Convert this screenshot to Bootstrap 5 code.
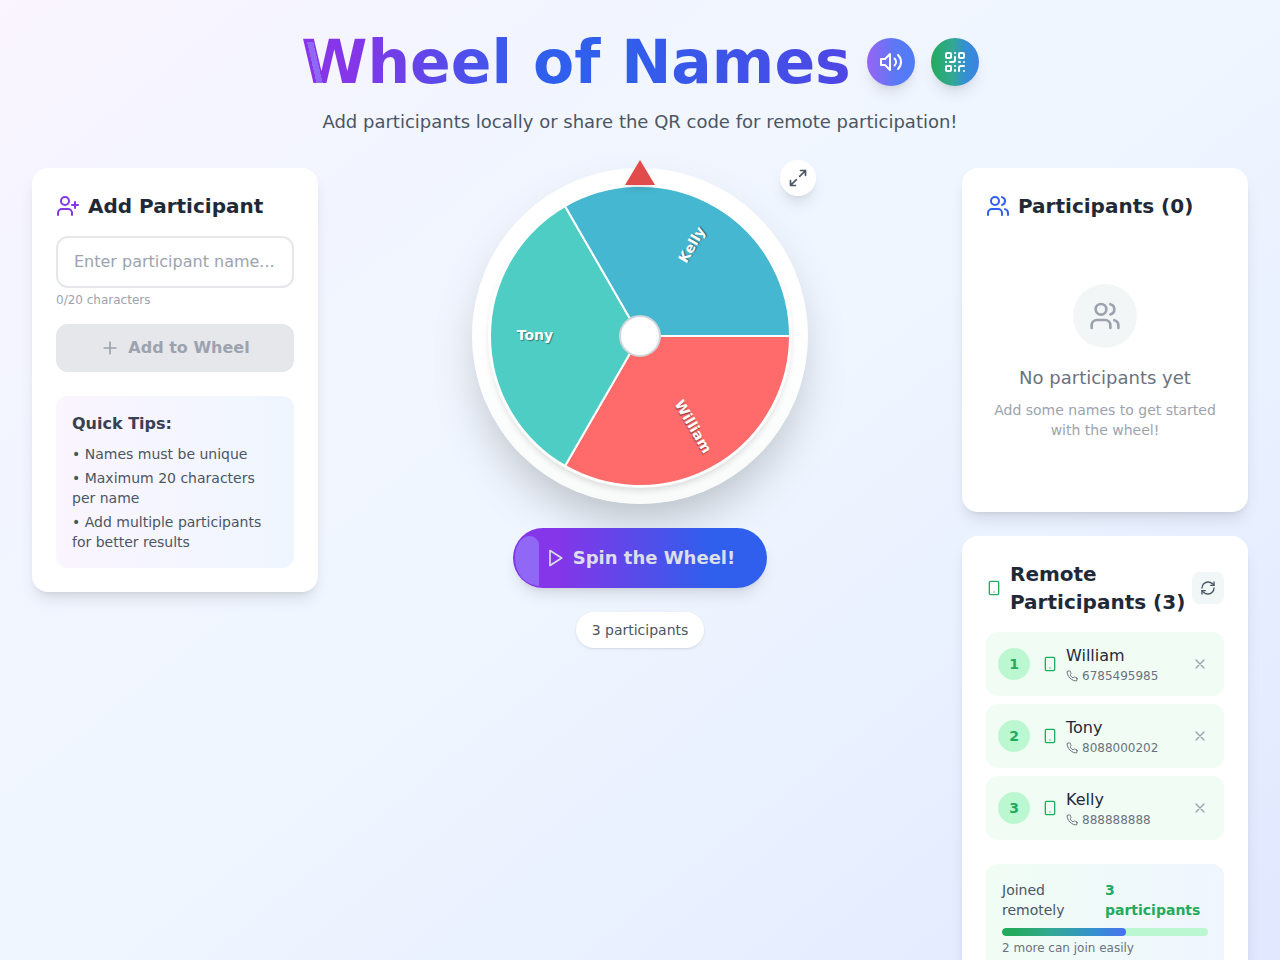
<!DOCTYPE html>
<html lang="en">
<head>
<meta charset="utf-8">
<meta name="viewport" content="width=device-width, initial-scale=1">
<title>Wheel of Names</title>
<link href="https://cdn.jsdelivr.net/npm/bootstrap@5.3.0/dist/css/bootstrap.min.css" rel="stylesheet">
<style>
  :root { --ink: #1f2937; --ink-2: #4b5563; --ink-3: #6b7280; --ink-4: #9ca3af; --green: #22ab5d; }
  body {
    font-family: "DejaVu Sans", sans-serif; color: var(--ink); min-height: 100vh; line-height: 24px;
    background: linear-gradient(to bottom right, #faf5ff, #f2f5ff 22%, #eff6ff 50%, #e0e7ff) no-repeat;
  }
  button, input { font-family: inherit; }
  .icon { fill: none; stroke: currentColor; stroke-width: 2; stroke-linecap: round; stroke-linejoin: round; flex: none; display: block; }
  .i12 { width: 12px; height: 12px; } .i16 { width: 16px; height: 16px; } .i20 { width: 20px; height: 20px; }
  .i24 { width: 24px; height: 24px; } .i32 { width: 32px; height: 32px; }
  .violet { color: #8436e8; } .blue { color: #2f5fec; }
  .page { padding: 32px; }
  .wordmark {
    font-size: 60px; line-height: 60px; font-weight: 700; color: transparent;
    background-image:
      linear-gradient(77deg, transparent 16px, #9068f5 16px, #9068f5 22px, transparent 22px),
      linear-gradient(to right, #8a34ea, #8436e8 10%, #2f5fec 42%, #2f5fec 58%, #4f46e5);
    background-size: 100% 45px, auto; background-position: 0 10px, 0 0; background-repeat: no-repeat;
    -webkit-background-clip: text; background-clip: text;
  }
  .tagline { font-size: 18px; line-height: 28px; color: var(--ink-2); margin-bottom: 32px; }
  .t-xl { font-size: 20px; line-height: 28px; font-weight: 700; }
  .t-lg { font-size: 18px; line-height: 28px; }
  .t-sm { font-size: 14px; line-height: 20px; }
  .t-xs { font-size: 12px; line-height: 16px; }
  .c2 { color: var(--ink-2); } .c3 { color: var(--ink-3); } .c4 { color: var(--ink-4); } .cg { color: var(--green); }
  .lift { box-shadow: 0 10px 15px -3px rgba(0,0,0,.1), 0 4px 6px -4px rgba(0,0,0,.1); }
  .panel { background: #fff; border-radius: 16px; padding: 24px; }
  .round-btn { width: 48px; height: 48px; border: 0; color: #fff; }
  .sound { background: linear-gradient(to right, #9864f4, #5b78f5 60%, #4f7cf5); }
  .qr { background: linear-gradient(to right, #22ab5d, #33a894 45%, #3490d0 70%, #3b82e6); }
  .name-box { border: 2px solid #e5e7eb; border-radius: 12px; padding: 12px 16px; line-height: 24px; }
  .name-box::placeholder { color: var(--ink-4); }
  .add-btn, .add-btn:disabled { background: #e5e7eb; color: var(--ink-4); border: 0; border-radius: 12px; padding: 12px; font-weight: 700; line-height: 24px; opacity: 1; }
  .tips { border-radius: 12px; padding: 16px; background: linear-gradient(to right, #faf5ff, #eff6ff); }
  .tips h3 { font-size: 16px; line-height: 24px; font-weight: 700; color: #374151; }
  .wheel {
    width: 336px; height: 336px; padding: 16px; background: linear-gradient(to bottom, #fff 40%, #f9fbfa);
    box-shadow: 0 25px 50px -12px rgba(0,0,0,.25);
  }
  .wheel-face { width: 304px; height: 304px; display: block; border-radius: 50%; box-shadow: 0 4px 6px -1px rgba(0,0,0,.12); }
  .wheel-face text { font-size: 14px; font-weight: 700; fill: #fff; text-anchor: middle; text-shadow: 1px 1px 1px rgba(0,0,0,.4); }
  .pointer {
    position: absolute; top: -8px; left: 50%; margin-left: -15px; width: 30px; height: 25px;
    filter: drop-shadow(0 4px 3px rgba(0,0,0,.1));
  }
  .pointer::before { content: ""; display: block; height: 100%; background: #e04c4c; clip-path: polygon(50% 0, 100% 100%, 0 100%); }
  .expand { position: absolute; top: -8px; right: -8px; width: 36px; height: 36px; border: 0; background: #fff; color: var(--ink-2); }
  .spin, .spin:hover {
    position: relative; overflow: hidden; border: 0; padding: 16px 32px; color: #dcdfea; font-weight: 700;
    background: linear-gradient(to right, #8436e8 18%, #2f5fec 78%);
  }
  .spin::before {
    content: ""; position: absolute; left: 2px; top: 8px; bottom: 2px; width: 24px; background: #9068f5;
    border-radius: 14px 9px 0 24px / 22px 9px 0 28px;
  }
  .count { background: #fff; padding: 8px 16px; box-shadow: 0 1px 3px rgba(0,0,0,.1), 0 1px 2px -1px rgba(0,0,0,.1); }
  .empty { padding: 48px 0; }
  .empty-icon { width: 64px; height: 64px; background: #f3f6f7; }
  .refresh { width: 32px; height: 32px; border: 0; border-radius: 8px; background: #f1f6f6; color: var(--ink-2); }
  .entry { background: #f1fcf5; border-radius: 12px; padding: 12px; }
  .rank { width: 32px; height: 32px; background: #bbf7d0; font-weight: 700; margin-right: 12px; }
  .drop { border: 0; background: none; padding: 4px; color: var(--ink-4); }
  .joined { background: linear-gradient(to right, #f0fdf4, #eff6ff); border-radius: 12px; padding: 16px; }
  .meter { height: 8px; background: #bbf7d0; border-radius: 8px; }
  .meter .progress-bar { border-radius: 8px; background: linear-gradient(to right, #22ab5d 10%, #33a894 40%, #3490d0 75%, #4b70f0); }
</style>
</head>
<body>
<svg width="0" height="0" class="d-none" aria-hidden="true">
  <symbol id="users" viewBox="0 0 24 24"><path d="M16 21v-2a4 4 0 0 0-4-4H6a4 4 0 0 0-4 4v2"/><circle cx="9" cy="7" r="4"/><path d="M22 21v-2a4 4 0 0 0-3-3.87M16 3.13a4 4 0 0 1 0 7.75"/></symbol>
  <symbol id="mobile" viewBox="0 0 24 24"><rect x="5" y="2" width="14" height="20" rx="2"/><path d="M12 18h.01"/></symbol>
  <symbol id="phone" viewBox="0 0 24 24"><path d="M22 16.92v3a2 2 0 0 1-2.18 2 19.79 19.79 0 0 1-8.63-3.07 19.5 19.5 0 0 1-6-6 19.79 19.79 0 0 1-3.07-8.67A2 2 0 0 1 4.11 2h3a2 2 0 0 1 2 1.72 12.84 12.84 0 0 0 .7 2.81 2 2 0 0 1-.45 2.11L8.09 9.91a16 16 0 0 0 6 6l1.27-1.27a2 2 0 0 1 2.11-.45 12.84 12.84 0 0 0 2.81.7A2 2 0 0 1 22 16.92z"/></symbol>
  <symbol id="cross" viewBox="0 0 24 24"><path d="M18 6 6 18M6 6l12 12"/></symbol>
</svg>

<div class="container-fluid page">
  <header class="text-center">
    <div class="d-flex justify-content-center align-items-center gap-3 mb-3">
      <h1 class="wordmark mb-0">Wheel of Names</h1>
      <button type="button" class="round-btn sound lift rounded-circle d-flex align-items-center justify-content-center p-0" aria-label="Sound">
        <svg class="icon i24" viewBox="0 0 24 24"><path d="M11 4 6 9H2v6h4l5 5z"/><path d="M15.54 8.46a5 5 0 0 1 0 7.07M19.07 4.93a10 10 0 0 1 0 14.14"/></svg>
      </button>
      <button type="button" class="round-btn qr lift rounded-circle d-flex align-items-center justify-content-center p-0" aria-label="QR code">
        <svg class="icon i24" viewBox="0 0 24 24"><rect x="3" y="3" width="5" height="5" rx="1"/><rect x="16" y="3" width="5" height="5" rx="1"/><rect x="3" y="16" width="5" height="5" rx="1"/><path d="M21 16h-3a2 2 0 0 0-2 2v3M21 21v.01M12 7v3a2 2 0 0 1-2 2H7M3 12h.01M12 3h.01M12 16v.01M16 12h1M21 12v.01M12 21v-1"/></svg>
      </button>
    </div>
    <p class="tagline">Add participants locally or share the QR code for remote participation!</p>
  </header>

  <main class="row g-4">
    <div class="col-md-3">
      <section class="panel lift">
        <h2 class="t-xl d-flex align-items-center gap-2 mb-3">
          <svg class="icon i24 violet" viewBox="0 0 24 24"><path d="M16 21v-2a4 4 0 0 0-4-4H6a4 4 0 0 0-4 4v2"/><circle cx="9" cy="7" r="4"/><path d="M19 8v6M22 11h-6"/></svg>
          Add Participant
        </h2>
        <form>
          <input type="text" id="participant" class="form-control name-box" placeholder="Enter participant name..." maxlength="20" aria-label="Participant name">
          <label for="participant" class="t-xs c4 d-block mt-1 mb-3">0/20 characters</label>
          <button type="submit" class="btn add-btn w-100 d-flex align-items-center justify-content-center gap-2" disabled>
            <svg class="icon i20" viewBox="0 0 24 24"><path d="M5 12h14M12 5v14"/></svg>
            Add to Wheel
          </button>
        </form>
        <div class="tips mt-4">
          <h3 class="mb-2">Quick Tips:</h3>
          <ul class="list-unstyled t-sm c2 mb-0 d-flex flex-column gap-1">
            <li>• Names must be unique</li>
            <li>• Maximum 20 characters per name</li>
            <li>• Add multiple participants for better results</li>
          </ul>
        </div>
      </section>
    </div>

    <div class="col-md-6 d-flex flex-column align-items-center gap-4">
      <div class="position-relative">
        <div class="wheel rounded-circle">
          <svg class="wheel-face" viewBox="-152 -152 304 304" role="img" aria-label="Wheel">
            <g stroke="#fff" stroke-width="2">
              <path fill="#ff6b6b" d="M0 0H150A150 150 0 0 1 -75 129.9Z"/>
              <path fill="#4ecdc4" d="M0 0L-75 129.9A150 150 0 0 1 -75 -129.9Z"/>
              <path fill="#45b7d1" d="M0 0L-75 -129.9A150 150 0 0 1 150 0Z"/>
            </g>
            <text transform="rotate(60)" x="105" y="4">William</text>
            <text x="-105" y="4">Tony</text>
            <text transform="rotate(-60)" x="105" y="4">Kelly</text>
            <circle r="20" fill="#fff" stroke="#d1d5db" stroke-width="2"/>
          </svg>
        </div>
        <div class="pointer"></div>
        <button type="button" class="expand lift rounded-circle d-flex align-items-center justify-content-center p-0" aria-label="Full screen">
          <svg class="icon i20" viewBox="0 0 24 24"><path d="M15 3h6v6M9 21H3v-6M21 3l-7 7M3 21l7-7"/></svg>
        </button>
      </div>
      <button type="button" class="btn spin lift rounded-pill t-lg d-flex align-items-center gap-2">
        <svg class="icon i20" viewBox="0 0 24 24"><path d="m6 3 14 9-14 9z"/></svg>
        Spin the Wheel!
      </button>
      <div class="count rounded-pill t-sm c2">3 participants</div>
    </div>

    <div class="col-md-3 d-flex flex-column gap-4">
      <section class="panel lift">
        <h2 class="t-xl d-flex align-items-center gap-2 mb-3">
          <svg class="icon i24 blue"><use href="#users"/></svg>
          Participants (0)
        </h2>
        <div class="empty text-center">
          <div class="empty-icon rounded-circle d-flex align-items-center justify-content-center mx-auto mb-3 c4">
            <svg class="icon i32"><use href="#users"/></svg>
          </div>
          <p class="t-lg c3 mb-2">No participants yet</p>
          <p class="t-sm c4 mb-0">Add some names to get started with the wheel!</p>
        </div>
      </section>

      <section class="panel lift">
        <div class="d-flex align-items-center justify-content-between mb-3">
          <h2 class="t-xl d-flex align-items-center gap-2 mb-0">
            <svg class="icon i16 cg"><use href="#mobile"/></svg>
            Remote Participants (3)
          </h2>
          <button type="button" class="refresh d-flex align-items-center justify-content-center flex-shrink-0 p-0" aria-label="Refresh">
            <svg class="icon i16" viewBox="0 0 24 24"><path d="M3 12a9 9 0 0 1 9-9 9.75 9.75 0 0 1 6.74 2.74L21 8"/><path d="M21 3v5h-5M21 12a9 9 0 0 1-9 9 9.75 9.75 0 0 1-6.74-2.74L3 16"/><path d="M8 16H3v5"/></svg>
          </button>
        </div>
        <ul class="list-unstyled d-flex flex-column gap-2 mb-4">
          <li class="entry d-flex align-items-center">
            <span class="rank rounded-circle d-flex align-items-center justify-content-center t-sm cg">1</span>
            <svg class="icon i16 cg me-2"><use href="#mobile"/></svg>
            <div class="flex-grow-1">
              <div>William</div>
              <div class="t-xs c3 d-flex align-items-center gap-1"><svg class="icon i12"><use href="#phone"/></svg>6785495985</div>
            </div>
            <button type="button" class="drop ms-2" aria-label="Remove William"><svg class="icon i16"><use href="#cross"/></svg></button>
          </li>
          <li class="entry d-flex align-items-center">
            <span class="rank rounded-circle d-flex align-items-center justify-content-center t-sm cg">2</span>
            <svg class="icon i16 cg me-2"><use href="#mobile"/></svg>
            <div class="flex-grow-1">
              <div>Tony</div>
              <div class="t-xs c3 d-flex align-items-center gap-1"><svg class="icon i12"><use href="#phone"/></svg>8088000202</div>
            </div>
            <button type="button" class="drop ms-2" aria-label="Remove Tony"><svg class="icon i16"><use href="#cross"/></svg></button>
          </li>
          <li class="entry d-flex align-items-center">
            <span class="rank rounded-circle d-flex align-items-center justify-content-center t-sm cg">3</span>
            <svg class="icon i16 cg me-2"><use href="#mobile"/></svg>
            <div class="flex-grow-1">
              <div>Kelly</div>
              <div class="t-xs c3 d-flex align-items-center gap-1"><svg class="icon i12"><use href="#phone"/></svg>888888888</div>
            </div>
            <button type="button" class="drop ms-2" aria-label="Remove Kelly"><svg class="icon i16"><use href="#cross"/></svg></button>
          </li>
        </ul>
        <div class="joined">
          <div class="d-flex justify-content-between align-items-center t-sm mb-2">
            <span class="c2">Joined remotely</span>
            <span class="fw-bold cg">3 participants</span>
          </div>
          <div class="progress meter" role="progressbar" aria-label="Joined remotely" aria-valuenow="60" aria-valuemin="0" aria-valuemax="100">
            <div class="progress-bar" style="width:60%"></div>
          </div>
          <div class="t-xs c3 mt-1">2 more can join easily</div>
        </div>
      </section>
    </div>
  </main>
</div>
<script src="https://cdn.jsdelivr.net/npm/bootstrap@5.3.0/dist/js/bootstrap.bundle.min.js"></script>
</body>
</html>
